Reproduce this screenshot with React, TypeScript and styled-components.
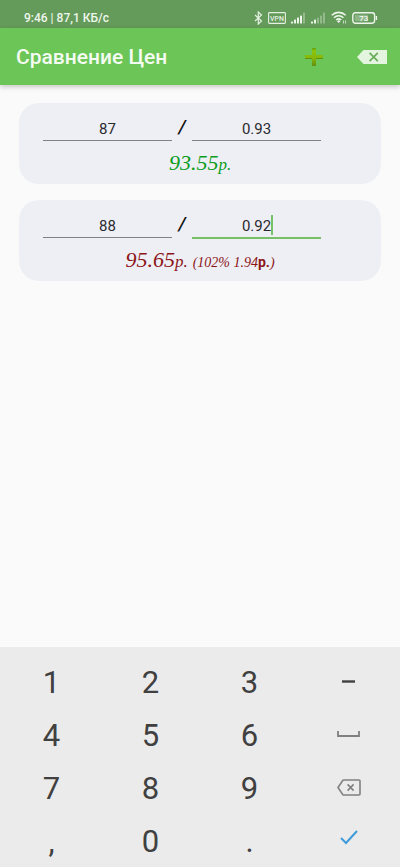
import React, { useState } from "react";
import styled, { createGlobalStyle } from "styled-components";

const Global = createGlobalStyle`
  *, *::before, *::after { box-sizing: border-box; }
  body { margin: 0; background: #fafafa; font-family: Roboto, "Noto Sans", sans-serif; }
  button { font: inherit; border: 0; background: none; padding: 0; cursor: pointer; }
  svg { display: block; }
`;

const Screen = styled.div`
  min-height: 100vh;
  display: flex;
  flex-direction: column;
`;

const StatusBar = styled.div`
  height: 28px;
  padding: 7px 22px 0 24px;
  display: flex;
  justify-content: space-between;
  align-items: center;
  background: #649a5a;
  color: #eef6ec;
  font-size: 12px;
  line-height: 20px;
  font-weight: 500;
`;

const StatusIcons = styled.div`
  display: flex;
  align-items: center;
  gap: 5px;
`;

const AppBar = styled.header`
  height: 57px;
  padding: 1px 13px 0 16px;
  display: flex;
  align-items: center;
  background: #6cc557;
  box-shadow: 0 2px 5px rgba(0, 0, 0, 0.2);
`;

const Title = styled.h1`
  margin: 0;
  flex: 1;
  color: #f4fbf2;
  font-size: 21px;
  line-height: 24px;
  font-weight: 500;
`;

const Actions = styled.div`
  display: flex;
  align-items: center;
  gap: 34px;
`;

const List = styled.main`
  flex: 1;
  padding: 18px 19px;
  display: flex;
  flex-direction: column;
  gap: 16px;
`;

const Card = styled.section`
  height: 81px;
  padding: 11px 24px 0;
  border-radius: 20px;
  background: #eeeff5;
`;

const Fields = styled.div`
  display: flex;
  margin-right: 36px;
`;

const FieldBox = styled.div`
  flex: 1;
  min-width: 0;
  height: 28px;
  position: relative;
`;

const Field = styled.input<{ $active?: boolean }>`
  display: block;
  width: 100%;
  height: ${(p) => (p.$active ? 28 : 27)}px;
  padding: 3px 0 0;
  border: 0;
  border-bottom: ${(p) => (p.$active ? "2px solid #76c065" : "1px solid #808087")};
  border-radius: 0;
  outline: 0;
  background: transparent;
  color: #2a2a2d;
  font: 400 15px/23px Roboto, sans-serif;
  text-align: center;
  caret-color: transparent;
`;

const Caret = styled.span`
  position: absolute;
  top: 4px;
  left: calc(50% + 14px);
  width: 2px;
  height: 20px;
  background: #76c065;
`;

const Slash = styled.span`
  width: 20px;
  color: #111;
  font-size: 19px;
  line-height: 26px;
  font-weight: 500;
  font-style: italic;
  text-align: center;
`;

const Result = styled.p<{ $tone: string }>`
  margin: 9px 0 0;
  display: flex;
  justify-content: center;
  align-items: baseline;
  gap: 5px;
  color: ${(p) => p.$tone};
  font: italic 400 22px/24px "Liberation Serif", serif;
`;

const Unit = styled.small`
  font-size: 17px;
`;

const Note = styled.span`
  font-size: 14px;
  b {
    font: 700 14px Roboto, sans-serif;
  }
`;

const Keyboard = styled.div`
  padding: 8px 2px 0;
  display: grid;
  grid-template-columns: repeat(4, 1fr);
  grid-auto-rows: 53px;
  background: #ebebeb;
`;

const Key = styled.button`
  display: flex;
  align-items: center;
  justify-content: center;
  color: #404040;
  && {
    font-size: 31px;
    line-height: 36px;
  }
`;

const Glyph = styled.span`
  padding-top: 2px;
`;

const Bluetooth = () => (
  <svg width="9" height="14" viewBox="0 0 9 14" fill="none" stroke="#e4f0e1" strokeWidth="1.2" aria-hidden="true">
    <path d="M1 4l6.5 6L4.3 13V1l3.2 3L1 10" />
  </svg>
);

const Vpn = () => (
  <svg width="18" height="12" viewBox="0 0 18 12" aria-label="VPN">
    <rect x="0.6" y="0.6" width="16.8" height="10.8" rx="0.8" fill="none" stroke="#e4f0e1" strokeWidth="1.1" />
    <text x="9" y="8.6" textAnchor="middle" fill="#e4f0e1" fontFamily="Roboto, sans-serif" fontSize="7" fontWeight="500">VPN</text>
  </svg>
);

const Signal = ({ level }: { level: number }) => (
  <svg width="15" height="12" viewBox="0 0 15 12" aria-hidden="true">
    {[2, 4, 6, 8, 11].map((h, i) => (
      <rect key={h} x={i * 3} y={11.5 - h} width="2" height={h} rx="0.6" fill="#eef6ec" opacity={i < level ? 1 : 0.35} />
    ))}
  </svg>
);

const Wifi = () => (
  <svg width="16" height="13" viewBox="0 0 16 13" fill="none" stroke="#eef6ec" aria-hidden="true">
    <path d="M0.8 4.2a9.8 9.8 0 0 1 13.8 0M3 6.7a6.7 6.7 0 0 1 9.4 0M5.2 9a3.7 3.7 0 0 1 5 0" strokeWidth="1.6" />
    <path d="M6 10.2a2.4 2.4 0 0 1 3.4 0L7.7 12z" fill="#eef6ec" stroke="none" />
    <path d="M12.5 12.5V9.5M14.5 9.5v3" strokeWidth="1" opacity="0.7" />
  </svg>
);

const Battery = () => (
  <svg width="26" height="12" viewBox="0 0 26 12" aria-label="73%">
    <rect x="0.8" y="0.8" width="21.8" height="10.4" rx="2.6" fill="none" stroke="#eef6ec" strokeWidth="1.4" />
    <rect x="2.8" y="2.8" width="13" height="6.4" rx="0.8" fill="#eef6ec" opacity="0.3" />
    <path d="M24.4 4v4" stroke="#eef6ec" strokeWidth="1.4" />
    <text x="11.8" y="8.9" textAnchor="middle" fill="#f7fbf6" fontFamily="Roboto, sans-serif" fontSize="8" fontWeight="500">73</text>
  </svg>
);

const Plus = () => (
  <svg width="18" height="18" viewBox="0 0 18 18" aria-hidden="true">
    <defs>
      <linearGradient id="plus" x1="0" y1="0" x2="0" y2="1">
        <stop offset="0" stopColor="#5f9f12" />
        <stop offset="0.15" stopColor="#8cc40a" />
        <stop offset="0.55" stopColor="#86b80a" />
        <stop offset="1" stopColor="#64900f" />
      </linearGradient>
    </defs>
    <path d="M7 0h4v7h7v4h-7v7H7v-7H0V7h7z" fill="url(#plus)" />
    <path d="M0 10.5h7M11 10.5h7" stroke="#64900f" />
  </svg>
);

const ClearAll = () => (
  <svg width="30" height="14" viewBox="0 0 30 14" aria-hidden="true">
    <path d="M0 7L6.5 0H30v14H6.5z" fill="#e3f4df" />
    <path d="M12.6 2.8l8.2 8.4M20.8 2.8l-8.2 8.4" stroke="#69ad59" strokeWidth="1.7" />
  </svg>
);

const Minus = () => (
  <svg width="13" height="3" viewBox="0 0 13 3" aria-hidden="true">
    <path d="M0 1.5h13" stroke="#404040" strokeWidth="2.4" />
  </svg>
);

const Space = () => (
  <svg width="23" height="7" viewBox="0 0 23 7" fill="none" stroke="#808080" strokeWidth="1.8" aria-hidden="true">
    <path d="M1 0v5h21V0" />
  </svg>
);

const Backspace = () => (
  <svg width="24" height="18" viewBox="0 0 24 18" fill="none" stroke="#808080" strokeWidth="1.6" aria-hidden="true">
    <path d="M7 1h15a1 1 0 0 1 1 1v13a1 1 0 0 1-1 1H7a1.6 1.6 0 0 1-1.3-.6L1 8.5l4.7-6.9A1.6 1.6 0 0 1 7 1z" />
    <path d="M10.6 5.4l6 6.2M16.6 5.4l-6 6.2" />
  </svg>
);

const Check = () => (
  <svg width="18" height="21" viewBox="0 0 18 21" fill="none" stroke="#3d9bd9" strokeWidth="2" aria-hidden="true">
    <path d="M1 8l5 5L17 1" />
  </svg>
);

const keys: { label: string; icon?: React.ReactNode }[] = [
  { label: "1" }, { label: "2" }, { label: "3" }, { label: "Минус", icon: <Minus /> },
  { label: "4" }, { label: "5" }, { label: "6" }, { label: "Пробел", icon: <Space /> },
  { label: "7" }, { label: "8" }, { label: "9" }, { label: "Удалить", icon: <Backspace /> },
  { label: "," }, { label: "0" }, { label: "." }, { label: "Готово", icon: <Check /> },
];

interface EntryProps {
  price: string;
  amount: string;
  active?: boolean;
  children: React.ReactNode;
}

function Entry({ price, amount, active, children }: EntryProps) {
  const [priceText, setPrice] = useState(price);
  const [amountText, setAmount] = useState(amount);
  return (
    <Card>
      <Fields>
        <FieldBox>
          <Field aria-label="Цена" inputMode="decimal" value={priceText} onChange={(e) => setPrice(e.target.value)} />
        </FieldBox>
        <Slash>/</Slash>
        <FieldBox>
          <Field $active={active} aria-label="Количество" inputMode="decimal" value={amountText} onChange={(e) => setAmount(e.target.value)} />
          {active && <Caret />}
        </FieldBox>
      </Fields>
      {children}
    </Card>
  );
}

export default function App() {
  return (
    <Screen>
      <Global />
      <StatusBar>
        <span>9:46 | 87,1 КБ/с</span>
        <StatusIcons>
          <Bluetooth />
          <Vpn />
          <Signal level={4} />
          <Signal level={2} />
          <Wifi />
          <Battery />
        </StatusIcons>
      </StatusBar>
      <AppBar>
        <Title>Сравнение Цен</Title>
        <Actions>
          <button aria-label="Добавить"><Plus /></button>
          <button aria-label="Очистить"><ClearAll /></button>
        </Actions>
      </AppBar>
      <List>
        <Entry price="87" amount="0.93">
          <Result $tone="#0c9d1c">
            <span>93.55<Unit>р.</Unit></span>
          </Result>
        </Entry>
        <Entry price="88" amount="0.92" active>
          <Result $tone="#8c1518">
            <span>95.65<Unit>р.</Unit></span>
            <Note>(102% 1.94<b>р.</b>)</Note>
          </Result>
        </Entry>
      </List>
      <Keyboard>
        {keys.map((k) => (
          <Key key={k.label} aria-label={k.icon ? k.label : undefined}>{k.icon ?? <Glyph>{k.label}</Glyph>}</Key>
        ))}
      </Keyboard>
    </Screen>
  );
}
